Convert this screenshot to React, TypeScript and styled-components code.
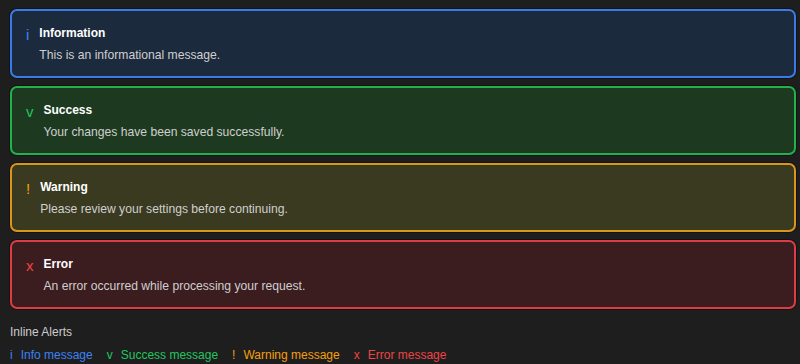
import React from "react";
import styled, { createGlobalStyle } from "styled-components";

const Global = createGlobalStyle`
  html, body { margin: 0; padding: 0; background: #1e1e1e; }
  body { font-family: "Liberation Sans", Arial, sans-serif; }
`;

type Kind = "info" | "success" | "warning" | "error";

const palette: Record<Kind, { border: string; bg: string; fg: string; icon: string }> = {
  info: { border: "#3b7be8", bg: "#1c2a3d", fg: "#3b82f6", icon: "i" },
  success: { border: "#22b14c", bg: "#1d3a20", fg: "#22c55e", icon: "v" },
  warning: { border: "#d9961a", bg: "#3a3a20", fg: "#f59e0b", icon: "!" },
  error: { border: "#dc3c44", bg: "#3b1c1f", fg: "#ef4444", icon: "x" },
};

const Page = styled.div`
  padding: 9px 4px 0 10px;
  display: flex;
  flex-direction: column;
  gap: 8px;
`;

const Alert = styled.div<{ $kind: Kind }>`
  display: flex;
  align-items: flex-start;
  gap: 10px;
  box-sizing: border-box;
  height: 69px;
  padding: 14px 14px 13px 14px;
  border: 2px solid ${(p) => palette[p.$kind].border};
  border-radius: 7px;
  background: ${(p) => palette[p.$kind].bg};
  box-shadow: 0 0 0 1px rgba(0, 0, 0, 0.35);
`;

const Icon = styled.span<{ $kind: Kind }>`
  color: ${(p) => palette[p.$kind].fg};
  font-size: 15px;
  line-height: 20px;
  margin-top: 0px;
`;

const Body = styled.div`
  display: flex;
  flex-direction: column;
  gap: 6px;
`;

const Title = styled.div`
  color: #ffffff;
  font-size: 12px;
  font-weight: 700;
  line-height: 16px;
`;

const Message = styled.div`
  color: #cfcfcf;
  font-size: 12.15px;
  line-height: 16px;
`;

const Heading = styled.div`
  margin-top: 7px;
  color: #cccccc;
  font-size: 12px;
  line-height: 16px;
`;

const InlineRow = styled.div`
  display: flex;
  gap: 14px;
  margin-top: -1px;
`;

const Inline = styled.span<{ $kind: Kind }>`
  display: inline-flex;
  gap: 8px;
  color: ${(p) => palette[p.$kind].fg};
  font-size: 12px;
  line-height: 16px;
`;

const alerts: { kind: Kind; title: string; message: string }[] = [
  { kind: "info", title: "Information", message: "This is an informational message." },
  { kind: "success", title: "Success", message: "Your changes have been saved successfully." },
  { kind: "warning", title: "Warning", message: "Please review your settings before continuing." },
  { kind: "error", title: "Error", message: "An error occurred while processing your request." },
];

const inline: { kind: Kind; text: string }[] = [
  { kind: "info", text: "Info message" },
  { kind: "success", text: "Success message" },
  { kind: "warning", text: "Warning message" },
  { kind: "error", text: "Error message" },
];

export default function App() {
  return (
    <>
      <Global />
      <Page>
        {alerts.map((a) => (
          <Alert key={a.kind} $kind={a.kind}>
            <Icon $kind={a.kind}>{palette[a.kind].icon}</Icon>
            <Body>
              <Title>{a.title}</Title>
              <Message>{a.message}</Message>
            </Body>
          </Alert>
        ))}
        <Heading>Inline Alerts</Heading>
        <InlineRow>
          {inline.map((i) => (
            <Inline key={i.kind} $kind={i.kind}>
              <span>{palette[i.kind].icon}</span>
              <span>{i.text}</span>
            </Inline>
          ))}
        </InlineRow>
      </Page>
    </>
  );
}
